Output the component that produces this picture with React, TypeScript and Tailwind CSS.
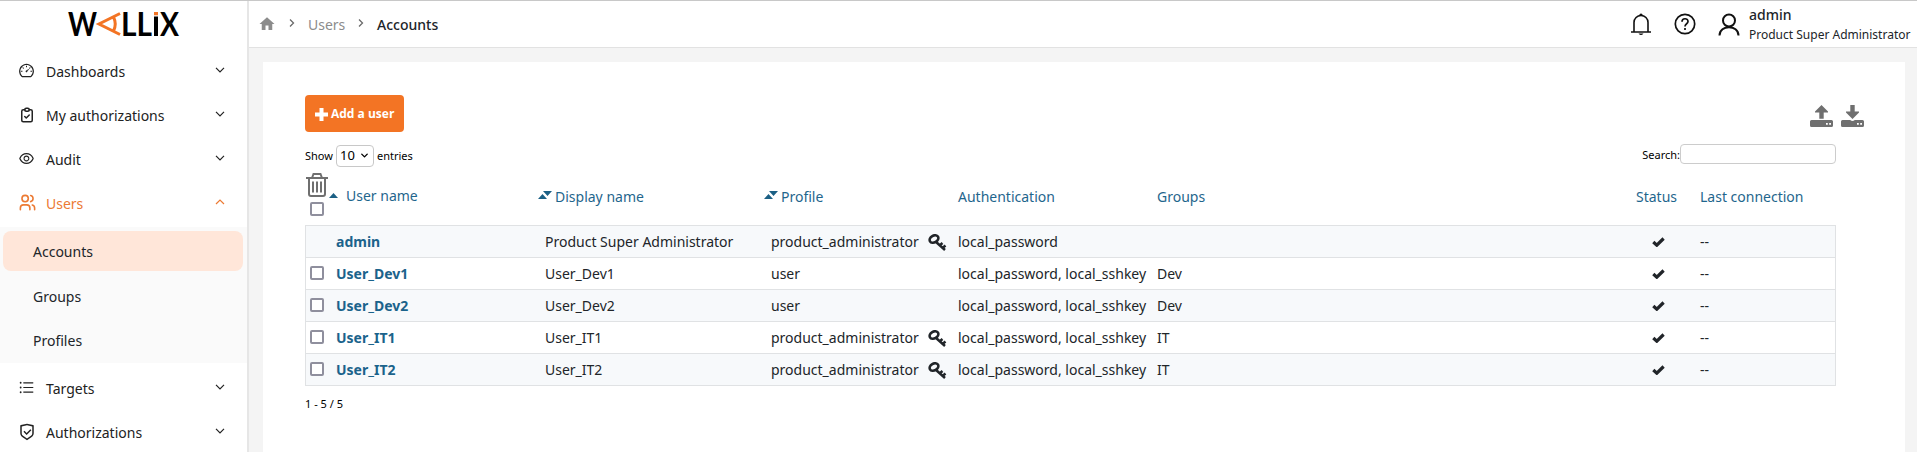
import React from "react";
import {
  AiOutlineDashboard,
  AiOutlineEye,
  AiOutlineUnorderedList,
} from "react-icons/ai";
import { LuChevronDown } from "react-icons/lu";
import { TbClipboardCheck, TbUsers } from "react-icons/tb";
import { RiShieldCheckLine } from "react-icons/ri";
import { MdHome } from "react-icons/md";

const users = [
  { name: "admin", display: "Product Super Administrator", profile: "product_administrator", auth: "local_password", group: "", locked: true },
  { name: "User_Dev1", display: "User_Dev1", profile: "user", auth: "local_password, local_sshkey", group: "Dev" },
  { name: "User_Dev2", display: "User_Dev2", profile: "user", auth: "local_password, local_sshkey", group: "Dev" },
  { name: "User_IT1", display: "User_IT1", profile: "product_administrator", auth: "local_password, local_sshkey", group: "IT" },
  { name: "User_IT2", display: "User_IT2", profile: "product_administrator", auth: "local_password, local_sshkey", group: "IT" },
];

const columns = "grid grid-cols-[29px_210px_226px_187px_199px_479px_64px_135px]";

function Logo() {
  return (
    <svg width="116" height="46" viewBox="-2 -10 116 46" fontFamily="Lato, sans-serif" fontWeight="700" fontSize="33">
      <text x="0" y="25" textLength="29" lengthAdjust="spacingAndGlyphs">W</text>
      <path d="M52 2.500 31 13l21 10.500M45.500 6q3.500 7 0 14" fill="none" stroke="#f37424" strokeWidth="3" />
      <text x="53" y="25" textLength="31" lengthAdjust="spacingAndGlyphs">LL</text>
      <path d="M86 5.500h4V25h-4z" fill="#000" />
      <path d="M86 1h4v3.300h-4z" fill="#f37424" />
      <text x="92" y="25" textLength="19" lengthAdjust="spacingAndGlyphs">X</text>
    </svg>
  );
}

function Chevron({ up }: { up?: boolean }) {
  return (
    <svg width="10" height="6" viewBox="0 0 10 6" fill="none" stroke="currentColor" strokeWidth="1.200">
      <path d={up ? "M1 5 5 1l4 4" : "M1 .8l4 4 4-4"} />
    </svg>
  );
}

function Separator() {
  return (
    <svg width="6" height="8" viewBox="0 0 6 8" fill="none" stroke="#6b6b6b" strokeWidth="1.300" className="mb-0.5 shrink-0">
      <path d="M1 .5 4.500 4 1 7.500" />
    </svg>
  );
}

function NavItem({ icon, label, open }: { icon: React.ReactNode; label: string; open?: boolean }) {
  return (
    <div className={`flex h-11 shrink-0 items-center pl-[18px] pr-[22px] ${open ? "text-[#ec7a33]" : "text-[#222]"}`}>
      <span className="mb-px flex w-[28px] items-center">{icon}</span>
      <span className="flex-1 text-[14px]">{label}</span>
      <span className="mb-[3px]"><Chevron up={open} /></span>
    </div>
  );
}

function Checkbox() {
  return <span className="block size-[14px] rounded-[2px] border-2 border-[#8f8f9d] bg-white" />;
}

function SortBoth() {
  return (
    <svg width="14" height="8" viewBox="0 0 14 8" fill="#1b6085" className="mb-0.5">
      <path d="M0 8 4.500 3 9 8zM5 0h9L9.500 5z" />
    </svg>
  );
}

function KeyIcon() {
  return (
    <svg width="19" height="18" viewBox="0 0 19 18" fill="none" stroke="#212529" className="mt-0.5">
      <ellipse cx="6" cy="5" rx="4.600" ry="3.400" strokeWidth="2.600" transform="rotate(-30 6 5)" />
      <path d="m7.500 7.500 9.500 8.500M11.500 11.500l3-2.500M14.500 14l3-2.500" strokeWidth="2.500" />
    </svg>
  );
}

function CheckIcon() {
  return (
    <svg width="13" height="10" viewBox="0 0 13 10">
      <path d="m1.300 5 3.500 3.200 6.800-6.700" fill="none" stroke="#212529" strokeWidth="3.200" />
    </svg>
  );
}

function TransferIcon({ up }: { up?: boolean }) {
  return (
    <svg width="23" height="22" viewBox="0 0 23 22" fill="#6f6f6f">
      <path d={up ? "M11.500 0 18 6.500v1h-4.300v6.200H9.300V7.500H5v-1z" : "M9.300 0h4.400v6.500H18v1L11.500 14 5 7.500v-1h4.300z"} />
      <path fillRule="evenodd" d={up ? "M1.500 15H21.500q1.500 0 1.500 1.500v4q0 1.500-1.500 1.500h-20Q0 22 0 20.500v-4Q0 15 1.500 15zM16 18v1.800h1.800V18zm3.200 0v1.800H21V18z" : "M1.500 15h7.700q2.300 2 4.600 0h7.700q1.500 0 1.500 1.500v4q0 1.500-1.500 1.500h-20Q0 22 0 20.500v-4Q0 15 1.500 15zM16 18v1.800h1.800V18zm3.200 0v1.800H21V18z"} />
    </svg>
  );
}

function TrashIcon() {
  return (
    <svg width="22" height="24" viewBox="0 0 22 24" fill="none" stroke="#6f6f6f" strokeWidth="2">
      <path d="M0 5h22M6 5l1.500-4h7L16 5M3 5v16q0 2 2 2h12q2 0 2-2V5M7 8.500v11M11 8.500v11M15 8.500v11" />
    </svg>
  );
}

export default function App() {
  return (
    <div className="flex h-[452px] w-full overflow-hidden border-t border-[#c8c8c8] bg-[#f4f4f4] font-['Noto_Sans',sans-serif] text-[#212529]">
      <aside className="flex w-[249px] shrink-0 flex-col border-r-2 border-[#e6e6e6] bg-white">
        <div className="flex h-[48px] shrink-0 items-start pl-[66px]"><Logo /></div>
        <NavItem icon={<AiOutlineDashboard size={17} />} label="Dashboards" />
        <NavItem icon={<TbClipboardCheck size={18} />} label="My authorizations" />
        <NavItem icon={<AiOutlineEye size={17} />} label="Audit" />
        <NavItem icon={<TbUsers size={19} />} label="Users" open />
        <div className="mb-[3px] mt-[2px] h-[136px] shrink-0 bg-[#fafafa] pt-1 text-[14px]">
          <div className="ml-[3px] mr-1 flex h-10 items-center rounded-lg bg-[#ffe6d9] pl-[30px] pt-px">Accounts</div>
          <div className="mt-[3px] flex h-11 items-center pl-[33px]">Groups</div>
          <div className="flex h-11 items-center pl-[33px]">Profiles</div>
        </div>
        <NavItem icon={<AiOutlineUnorderedList size={17} />} label="Targets" />
        <NavItem icon={<RiShieldCheckLine size={18} />} label="Authorizations" />
      </aside>

      <div className="flex min-w-0 flex-1 flex-col">
        <header className="flex h-[47px] shrink-0 items-center border-b border-[#e2e2e2] bg-white pl-[9px]">
          <MdHome size={18} className="text-[#8c8c8c]" />
          <span className="ml-[13px] flex w-[19px]"><Separator /></span>
          <span className="w-[50px] text-[14px] text-[#8c8c8c]">Users</span>
          <span className="flex w-[19px]"><Separator /></span>
          <span className="text-[14px] font-medium">Accounts</span>
          <svg className="ml-auto" width="20" height="23" viewBox="0 0 20 23" fill="none" stroke="#111" strokeWidth="1.600">
            <path d="M0 19h20M3 19V9.500a7 7 0 0 1 14 0V19" />
            <path d="M8.300 2.300a1.700 1.700 0 1 1 3.400 0zM7.500 20.500h5q-2.500 3-5 0z" fill="#111" stroke="none" />
          </svg>
          <svg className="ml-[23px]" width="22" height="22" viewBox="0 0 22 22" fill="none" stroke="#111" strokeWidth="1.700">
            <circle cx="11" cy="11" r="9.700" />
            <path d="M8 8.800c0-4 6-4 6-.3 0 2.300-3 2.300-3 5M11 15v2" />
          </svg>
          <svg className="ml-[22px]" width="22" height="23" viewBox="0 0 22 23" fill="none" stroke="#111" strokeWidth="2">
            <circle cx="11" cy="7.500" r="6" />
            <path d="M1.500 22.500c0-11 19-11 19 0" />
          </svg>
          <div className="ml-[9px] mt-px w-[168px] whitespace-nowrap">
            <div className="text-[14px] font-medium leading-5">admin</div>
            <div className="text-[12px] leading-5">Product Super Administrator</div>
          </div>
        </header>

        <main className="ml-[14px] mr-3 mt-[14px] flex-1 bg-white pl-[42px] pr-[69px] pt-[33px]">
          <div className="flex h-[37px] justify-between">
            <button className="flex h-[37px] w-[99px] items-center whitespace-nowrap rounded-[4px] bg-[#f37424] pl-[10px] pt-px font-['Open_Sans',sans-serif] text-[12px] font-bold text-white">
              <svg width="13" height="13" viewBox="0 0 13 13" className="mr-[3px]"><path d="M6.500 0v13M0 6.500h13" stroke="currentColor" strokeWidth="4" /></svg>
              Add a user
            </button>
            <div className="-mr-7 flex gap-2 pt-[10px]"><TransferIcon up /><TransferIcon /></div>
          </div>
          <div className="mt-3 flex h-[23px] justify-between text-[11px] text-black">
            <div className="flex items-center">
              <span className="w-[31px] pt-px">Show</span>
              <span className="flex h-[22px] w-[38px] items-center justify-between rounded-[4px] border border-[#c8c8c8] px-[3px] text-[13px]">10<LuChevronDown size={11} strokeWidth={3} /></span>
              <span className="ml-[3px] pt-px">entries</span>
            </div>
            <div className="flex items-center">
              <span>Search:</span>
              <input className="mb-1 h-5 w-[156px] rounded-[4px] border border-[#ccc] bg-white" aria-label="Search" />
            </div>
          </div>

          <div className={`${columns} mt-1 h-[54px] pl-px text-[14px] text-[#1f668d]`}>
            <div className="flex flex-col items-start pt-[2px]"><TrashIcon /><span className="ml-1 mt-[5px]"><Checkbox /></span></div>
            <div className="-ml-[6px] flex h-[49px] items-center">
              <svg width="9" height="5" viewBox="0 0 9 5"><path d="M0 5 4.500 0 9 5z" fill="#1b6085" /></svg>
              <span className="ml-2">User name</span>
            </div>
            <div className="-ml-[7px] flex h-[50px] items-center gap-[3px]"><SortBoth />Display name</div>
            <div className="-ml-[7px] flex h-[50px] items-center gap-[3px]"><SortBoth />Profile</div>
            <div className="flex h-[50px] items-center">Authentication</div>
            <div className="flex h-[50px] items-center">Groups</div>
            <div className="flex h-[50px] items-center">Status</div>
            <div className="flex h-[50px] items-center">Last connection</div>
          </div>

          <div className="border-x border-t border-[#e0e2e4]">
            {users.map((user) => (
              <div key={user.name} className={`${columns} h-8 items-center border-b border-[#e0e2e4] text-[14px] odd:bg-[#f7f9fb]`}>
                <div className="pb-px pl-1">{!user.locked && <Checkbox />}</div>
                <div className="pl-px font-bold text-[#1b638b]">{user.name}</div>
                <div>{user.display}</div>
                <div className="flex items-center justify-between pr-[11px]">
                  <span>{user.profile}</span>
                  {user.profile !== "user" && <KeyIcon />}
                </div>
                <div className="whitespace-nowrap">{user.auth}</div>
                <div>{user.group}</div>
                <div className="pl-4"><CheckIcon /></div>
                <div>--</div>
              </div>
            ))}
          </div>
          <div className="mt-[10px] text-[11px] text-black">1 - 5 / 5</div>
        </main>
      </div>
    </div>
  );
}
